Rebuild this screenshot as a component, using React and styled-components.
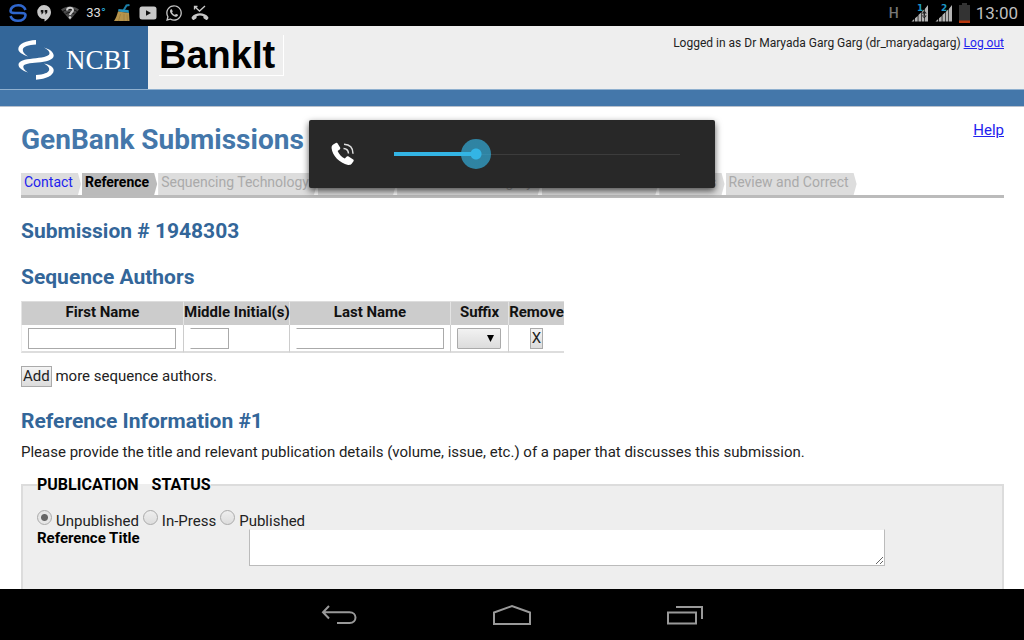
import { useState } from 'react';
import styled, { createGlobalStyle } from 'styled-components';
import { FaWhatsapp } from 'react-icons/fa';

const GlobalStyle = createGlobalStyle`
  * {
    box-sizing: border-box;
  }

  body {
    margin: 0;
    background: #000;
    color: #222;
    font-family: Roboto, 'Liberation Sans', sans-serif;
    font-size: 15px;
    line-height: 18px;
  }

  button,
  input,
  select,
  textarea {
    font: inherit;
    margin: 0;
  }

  a {
    color: #22e;
  }
`;

const Device = styled.div`
  position: relative;
  display: flex;
  flex-direction: column;
  height: 100vh;
  overflow: hidden;
`;

/* status bar */

const StatusBar = styled.div`
  flex: none;
  display: flex;
  align-items: center;
  justify-content: space-between;
  height: 26px;
  padding: 0 6px 0 5px;
  background: #000;
`;

const StatusGroup = styled.div`
  display: flex;
  align-items: center;
  gap: ${(props) => props.$gap || 0}px;
`;

const StatusIcon = styled.div`
  display: flex;
  align-items: center;
  justify-content: center;
  width: 26px;
  height: 26px;
  color: #c4c4c4;
`;

const Temperature = styled.span`
  color: #ddd;
  font-family: 'Liberation Sans Narrow', Roboto, sans-serif;
  font-size: 13px;

  span {
    color: #29a8d8;
  }
`;

const Network = styled.span`
  margin-right: 6px;
  color: #777;
  font-size: 14px;
  font-weight: 500;
`;

const Clock = styled.span`
  color: #bebebe;
  font-size: 17px;
`;

/* web page */

const Page = styled.div`
  flex: 1;
  min-height: 0;
  overflow: hidden;
  background: #fff;
`;

const Header = styled.header`
  display: flex;
  height: 63px;
  background: #eee;
`;

const Brand = styled.a`
  display: flex;
  align-items: center;
  gap: 12px;
  width: 148px;
  padding: 4px 0 0 18px;
  background: #369;
  color: #fff;
  font-family: 'Liberation Serif', serif;
  font-size: 27px;
  line-height: 32px;
  text-decoration: none;
`;

const Product = styled.div`
  align-self: flex-start;
  height: 41px;
  margin: 9px 0 0 11px;
  padding-right: 8px;
  border-right: 1px solid #fff;
  border-bottom: 1px solid #fff;
  color: #000;
  font-family: 'Liberation Sans', sans-serif;
  font-size: 38px;
  font-weight: bold;
  line-height: 40px;
`;

const Account = styled.div`
  margin: 9px 20px 0 auto;
  font-size: 12px;
  line-height: 16px;
`;

const BlueBar = styled.div`
  height: 18px;
  border-top: 1px solid #8fb0cf;
  border-bottom: 1px solid #b8c0cc;
  background: #47a;
`;

const Content = styled.main`
  padding: 14px 20px 0 21px;
`;

const TitleRow = styled.div`
  display: flex;
  justify-content: space-between;
  align-items: flex-start;
  height: 52px;
`;

const Title = styled.h1`
  margin: 0;
  padding-top: 3px;
  color: #47a;
  font-size: 28px;
  font-weight: 700;
  line-height: 32px;
`;

const Steps = styled.ol`
  display: flex;
  margin: 0;
  padding: 0;
  list-style: none;
  border-bottom: 3px solid #bbb;
`;

const Step = styled.li`
  height: 22px;
  padding: 0 9px 0 3px;
  background: ${(props) => (props.$current ? '#bbb' : '#ddd')};
  clip-path: polygon(0 0, calc(100% - 4px) 0, calc(100% - 1px) 50%, calc(100% - 4px) 100%, 0 100%);
  color: ${(props) => (props.$current ? '#000' : '#aaa')};
  font-size: 14px;
  font-weight: ${(props) => (props.$current ? 700 : 400)};
  line-height: 19px;
  white-space: nowrap;

  a {
    text-decoration: none;
  }
`;

const Heading = styled.h2`
  margin: 0;
  padding-top: 20px;
  color: #369;
  font-size: 21px;
  font-weight: 700;
  line-height: 26px;
`;

const AuthorsTable = styled.table`
  margin-top: 11px;
  border-spacing: 0;
  table-layout: fixed;
  width: 543px;
`;

const Col = styled.col`
  width: ${(props) => props.$width}px;
`;

const Th = styled.th`
  height: 24px;
  padding: 0 0 3px;
  border-top: 1px solid #ddd;
  border-left: 1px solid #e4e4e4;
  background: #ccc;
  color: #111;
  font-weight: 700;
  white-space: nowrap;
`;

const Td = styled.td`
  height: 28px;
  padding: 0 6px;
  border-bottom: 2px solid #ddd;
  border-left: 1px solid ${(props) => (props.$first ? '#eee' : '#ccc')};
  text-align: ${(props) => props.$align || 'left'};
`;

const TextInput = styled.input`
  display: block;
  width: ${(props) => props.$width}px;
  height: 21px;
  padding: 0 4px;
  border: 1px solid #aaa;
  border-left-color: ${(props) => (props.$openLeft ? '#fff' : '#aaa')};
  background: #fff;
`;

const SelectWrap = styled.div`
  display: grid;
  align-items: center;
  width: 44px;

  > * {
    grid-area: 1 / 1;
  }

  svg {
    justify-self: end;
    margin-right: 7px;
    pointer-events: none;
  }
`;

const Select = styled.select`
  appearance: none;
  width: 100%;
  height: 21px;
  border: 1px solid #aaa;
  border-radius: 1px;
  background: linear-gradient(#f2f2f2, #dcdcdc);
`;

const Button = styled.button`
  height: 21px;
  padding: 0 1px;
  border: 1px solid #aaa;
  background: linear-gradient(#f4f4f4, #dcdcdc);
  color: #222;
  line-height: 19px;
`;

const AddRow = styled.div`
  margin: 13px 0 1px;
  line-height: 21px;
`;

const Paragraph = styled.p`
  margin: 9px 0 0;
`;

const Fieldset = styled.fieldset`
  margin: 14px 0 0;
  padding: 15px 14px 60px;
  border: 2px solid #dcdcdc;
  background: #eee;
`;

const Legend = styled.legend`
  display: flex;
  gap: 13px;
  padding: 0;
  color: #000;
  font-size: 16px;
  font-weight: 700;
  line-height: 20px;
`;

const RadioRow = styled.div`
  display: flex;
  gap: 4px;
  height: 19px;
`;

const RadioLabel = styled.label`
  display: flex;
  gap: 4px;
  line-height: 22px;
`;

const Radio = styled.input`
  appearance: none;
  width: 15px;
  height: 15px;
  border: 1px solid #aaa;
  border-radius: 50%;
  background: linear-gradient(#eee, #ddd);

  &:checked {
    background: radial-gradient(circle, #666 3px, #e6e6e6 4px);
  }
`;

const Field = styled.div`
  display: flex;
  align-items: flex-start;

  label {
    width: 212px;
    color: #000;
    font-weight: 700;
  }
`;

const TextArea = styled.textarea`
  width: 636px;
  max-width: 100%;
  height: 37px;
  border: 1px solid #bbb;
  border-top-color: #eee;
  background: #fff;
`;

/* volume panel */

const VolumePanel = styled.div`
  position: absolute;
  top: 120px;
  left: 50%;
  display: flex;
  align-items: center;
  width: 406px;
  height: 68px;
  padding: 0 20px 0 22px;
  border-radius: 2px;
  background: #282828;
  box-shadow: 0 3px 7px rgba(0, 0, 0, 0.65);
  transform: translateX(-50%);
`;

const VolumeSlider = styled.input`
  appearance: none;
  flex: 1;
  min-width: 0;
  height: 32px;
  margin-left: 24px;
  background:
    linear-gradient(#33b5e5, #33b5e5) 15px center / calc((100% - 30px) * ${(props) => props.$level}) 4px no-repeat,
    linear-gradient(#3c3c3c, #3c3c3c) center / calc(100% - 30px) 1px no-repeat;

  &::-webkit-slider-thumb {
    appearance: none;
    width: 30px;
    height: 30px;
    border-radius: 50%;
    background: radial-gradient(circle, #33b5e5 5px, rgba(51, 181, 229, 0.65) 6px);
  }
`;

/* navigation bar */

const NavBar = styled.nav`
  flex: none;
  display: flex;
  justify-content: center;
  height: 51px;
  background: #000;
`;

const NavButton = styled.button`
  display: flex;
  align-items: center;
  justify-content: center;
  width: 173px;
  padding: 0;
  border: 0;
  background: none;
  color: #999;
`;

const SwiftIcon = () => (
  <svg width="18" height="20" viewBox="0 0 18 20" fill="none" stroke="#2f66cc" strokeWidth="2.600">
    <path d="M16.500 7C15.500 4 12.800 2.200 9.200 2.200C4.800 2.200 1.500 4.800 1.500 8C1.500 10.500 5 10 9 10C13 10 16.500 9.700 16.500 12.300C16.500 15.300 13.200 17.800 9 17.800C5.300 17.800 2.600 16 1.500 13" />
  </svg>
);

const HangoutsIcon = () => (
  <svg width="16" height="18" viewBox="0 0 16 18">
    <path fill="#c8c8c8" d="M8 1a7 7 0 0 1 7 7c0 4-3 7.500-6.500 9.500V15A7 7 0 1 1 8 1z" />
    <path fill="#111" d="M4.800 6h2.600v2.600L6 10.300H5.200l.7-1.700H4.800zM8.700 6h2.600v2.600l-1.400 1.700h-.8l.7-1.700H8.700z" />
  </svg>
);

const WifiIcon = () => (
  <svg width="18" height="16" viewBox="0 0 18 16">
    <path fill="#4a4a4a" d="M0 4.500C5 .5 13 .5 18 4.500L9 15z" />
    <path d="M2 6.500C6 3.500 12 3.500 16 6.500M4.500 9C7 7 11 7 13.500 9" stroke="#111" fill="none" />
    <path d="M6 5.500C6 1.800 12 1.800 12 5C12 7.500 9 7.200 9 10" stroke="#ccc" strokeWidth="2" fill="none" />
    <circle cx="9" cy="12.500" r="1.300" fill="#ccc" />
  </svg>
);

const BroomIcon = () => (
  <svg width="18" height="18" viewBox="0 0 18 18">
    <path d="M10.500 6.500L13.500 1.500L16.500 1" stroke="#1c7fa8" strokeWidth="2" fill="none" />
    <path fill="#2492bf" d="M5.500 5L15.500 6L16 9L5 7.500z" />
    <path fill="#b6944c" d="M5 7.500L16 9L16.500 17H1C3 14 4 11 5 7.500z" />
    <path d="M7.500 10L5.500 17M11 10V17M14 10.500L14.500 17" stroke="#8f7234" strokeWidth="0.500" />
  </svg>
);

const VideoIcon = () => (
  <svg width="18" height="14" viewBox="0 0 18 14">
    <rect x="0.500" y="0.500" width="17" height="13" rx="2.500" fill="#c8c8c8" />
    <path fill="#111" d="M7 4.200L12 7L7 9.800z" />
  </svg>
);

const MissedCallIcon = () => (
  <svg width="18" height="16" viewBox="0 0 18 16">
    <path d="M3.500 1.500L8.500 6L14 1M3.500 4.500V1.500H6.500" stroke="#c8c8c8" strokeWidth="1.300" fill="none" />
    <path fill="#c8c8c8" d="M.8 12C4.500 7 13.500 7 17.200 12c.4.6.3 1.200-.1 1.700l-.9 1c-.4.400-.9.400-1.300.1l-2-1.300c-.4-.3-.5-.6-.5-1v-1.300c-2.200-.8-4.600-.8-6.800 0v1.300c0 .4-.1.7-.5 1l-2 1.300c-.4.300-.9.300-1.300-.1l-.9-1c-.4-.5-.5-1.100-.1-1.700z" />
  </svg>
);

const SignalIcon = ({ sim, active }) => (
  <svg width="18" height="20" viewBox="0 0 18 20">
    <path fill="#b4b4b4" d="M.5 18.500h2.700v-2.600L.5 18.500zM4 18.500h2.700v-5.600L4 15.300zM7.400 18.500h2.700V9.600L7.400 12zM10.700 18.500h2.700V6.200l-2.700 2.700zM14 18.500h3V2l-3 3.700z" />
    {active && <path fill="#222" d="M13.300 7.500l2.500 3h-5zM13.300 15.500l2.500-3h-5zM12.600 9h1.400v5h-1.400z" />}
    <text x="6" y="7.500" fill="#1c96c4" fontSize="9" fontWeight="700" fontFamily="DejaVu Sans">
      {sim}
    </text>
  </svg>
);

const BatteryIcon = () => (
  <svg width="11" height="20" viewBox="0 0 11 20">
    <path fill="#333" d="M3 0h5v2h3v16H0V2h3z" />
    <rect y="17.500" width="11" height="2.500" fill="#b8380e" />
  </svg>
);

const NcbiLogo = () => (
  <svg width="36" height="40" viewBox="0 0 36 40" fill="#fff">
    <path d="M18 0V4.400C10.500 4.600 5.200 6.500 4.800 9.500C4.500 12 6.500 14.200 10 16.500C4.500 14.500.3 12.200.3 9C.3 4 8 .5 18 0z" />
    <path d="M26 7.500C31.500 9.200 35.800 12 35.700 15.800C35.500 20 28 21.800 19.500 22.600C12 23.200 5.800 23.800 5.300 26.500C5 28.500 7 30.500 10 32.500C4.500 30.500.4 28 .5 24.500C.7 20.800 6.500 19.500 15 18.500C23 17.500 31 17 31.500 13.500C31.800 11.300 29.500 9.500 26 7.500z" />
    <path d="M26 23.500C31.500 24.800 35.700 26.800 35.700 30.300C35.700 35.500 28 39.200 18 39.700V35C25.500 34.600 30.800 32.700 31.200 29.700C31.500 27.300 29.500 25.500 26 23.500z" />
  </svg>
);

const CallVolumeIcon = () => (
  <svg width="24" height="24" viewBox="0 0 24 24">
    <path fill="#fff" d="M2.200 2.600L4.800.9c.6-.4 1.300-.2 1.700.4l2.600 4.300c.4.600.2 1.400-.4 1.800L6.600 8.900c1.400 3.300 4 6 7.200 7.600l2-1.900c.5-.5 1.200-.5 1.800-.1l4.600 3c.6.400.7 1.100.3 1.700l-1.800 2.600c-.8 1-2.200 1.400-3.600 1.100C8.500 21 1.400 13.500.6 6.200.5 4.700.9 3.400 2.200 2.600z" />
    <path d="M12.500 6.500C15.600 6.700 17.300 8.500 17.500 11.500M13 2.300C18.700 2.500 22 6 22 11.700" stroke="#ddd" strokeWidth="1.500" fill="none" />
  </svg>
);

const BackIcon = () => (
  <svg width="36" height="20" viewBox="0 0 36 20" fill="none" stroke="currentColor" strokeWidth="2">
    <path d="M8 1L2 7.200L8 13.500M2 7.200H28.500C36.500 7.200 36.500 18 28.500 18H16" />
  </svg>
);

const HomeIcon = () => (
  <svg width="38" height="22" viewBox="0 0 38 22" fill="none" stroke="currentColor" strokeWidth="2">
    <path d="M1 20V8.500L19 2L37 8.500V20z" />
  </svg>
);

const RecentIcon = () => (
  <svg width="36" height="20" viewBox="0 0 36 20" fill="none" stroke="currentColor" strokeWidth="2">
    <path d="M1 7.500H29V18.500H1zM9 2H35V14" />
  </svg>
);

const STEPS = [
  'Contact',
  'Reference',
  'Sequencing Technology',
  'Nucleotide',
  'Submission Category',
  'Source Modifiers',
  'Features',
  'Review and Correct',
];

const STATUSES = ['Unpublished', 'In-Press', 'Published'];

const MAX_VOLUME = 7;

const App = () => {
  const [volume, setVolume] = useState(2);

  return (
    <Device>
      <GlobalStyle />
      <StatusBar>
        <StatusGroup>
          <StatusIcon><SwiftIcon /></StatusIcon>
          <StatusIcon><HangoutsIcon /></StatusIcon>
          <StatusIcon><WifiIcon /></StatusIcon>
          <StatusIcon>
            <Temperature>33<span>°</span></Temperature>
          </StatusIcon>
          <StatusIcon><BroomIcon /></StatusIcon>
          <StatusIcon><VideoIcon /></StatusIcon>
          <StatusIcon><FaWhatsapp size={18} /></StatusIcon>
          <StatusIcon><MissedCallIcon /></StatusIcon>
        </StatusGroup>
        <StatusGroup $gap={6}>
          <Network>H</Network>
          <SignalIcon sim="1" active />
          <SignalIcon sim="2" />
          <BatteryIcon />
          <Clock>13:00</Clock>
        </StatusGroup>
      </StatusBar>

      <Page>
        <Header>
          <Brand href="#ncbi">
            <NcbiLogo />
            NCBI
          </Brand>
          <Product>BankIt</Product>
          <Account>
            Logged in as Dr Maryada Garg Garg (dr_maryadagarg) <a href="#logout">Log out</a>
          </Account>
        </Header>
        <BlueBar />

        <Content>
          <TitleRow>
            <Title>GenBank Submissions</Title>
            <a href="#help">Help</a>
          </TitleRow>
          <Steps>
            {STEPS.map((step, index) => (
              <Step key={step} $current={index === 1}>
                {index === 0 ? <a href="#contact">{step}</a> : step}
              </Step>
            ))}
          </Steps>

          <Heading>Submission # 1948303</Heading>
          <Heading>Sequence Authors</Heading>
          <AuthorsTable>
            <colgroup>
              <Col $width={162} />
              <Col $width={106} />
              <Col $width={161} />
              <Col $width={58} />
              <Col $width={56} />
            </colgroup>
            <thead>
              <tr>
                <Th>First Name</Th>
                <Th>Middle Initial(s)</Th>
                <Th>Last Name</Th>
                <Th>Suffix</Th>
                <Th>Remove</Th>
              </tr>
            </thead>
            <tbody>
              <tr>
                <Td $first><TextInput $width={148} aria-label="First Name" /></Td>
                <Td><TextInput $width={39} $openLeft aria-label="Middle Initial(s)" /></Td>
                <Td><TextInput $width={148} $openLeft aria-label="Last Name" /></Td>
                <Td>
                  <SelectWrap>
                    <Select aria-label="Suffix">
                      <option value="" />
                    </Select>
                    <svg width="7" height="7" viewBox="0 0 7 7">
                      <path d="M0 0H7L3.500 7z" />
                    </svg>
                  </SelectWrap>
                </Td>
                <Td $align="center"><Button type="button">X</Button></Td>
              </tr>
            </tbody>
          </AuthorsTable>
          <AddRow>
            <Button type="button">Add</Button> more sequence authors.
          </AddRow>

          <Heading>Reference Information #1</Heading>
          <Paragraph>
            Please provide the title and relevant publication details (volume, issue, etc.) of a paper that
            discusses this submission.
          </Paragraph>
          <Fieldset>
            <Legend>
              <span>PUBLICATION</span>
              <span>STATUS</span>
            </Legend>
            <RadioRow>
              {STATUSES.map((status) => (
                <RadioLabel key={status}>
                  <Radio type="radio" name="status" defaultChecked={status === 'Unpublished'} />
                  {status}
                </RadioLabel>
              ))}
            </RadioRow>
            <Field>
              <label htmlFor="reference-title">Reference Title</label>
              <TextArea id="reference-title" />
            </Field>
          </Fieldset>
        </Content>
      </Page>

      <VolumePanel>
        <CallVolumeIcon />
        <VolumeSlider
          type="range"
          aria-label="Call volume"
          min={0}
          max={MAX_VOLUME}
          value={volume}
          $level={volume / MAX_VOLUME}
          onChange={(event) => setVolume(Number(event.target.value))}
        />
      </VolumePanel>

      <NavBar>
        <NavButton type="button" aria-label="Back"><BackIcon /></NavButton>
        <NavButton type="button" aria-label="Home"><HomeIcon /></NavButton>
        <NavButton type="button" aria-label="Recent apps"><RecentIcon /></NavButton>
      </NavBar>
    </Device>
  );
};

export default App;
